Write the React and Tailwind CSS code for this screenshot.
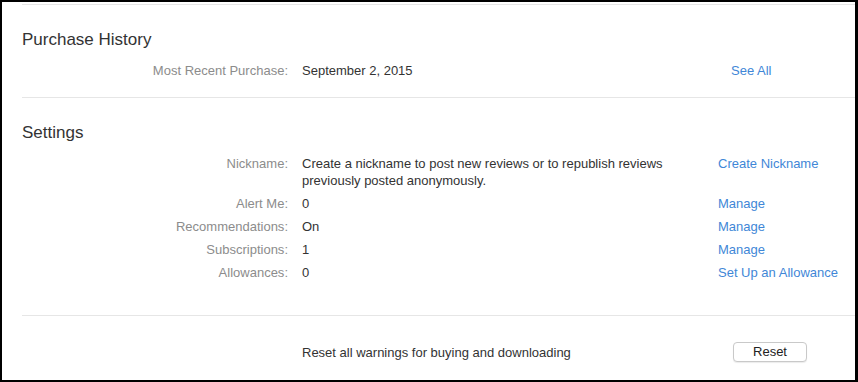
const SETTINGS = [
  { label: "Nickname", value: ["Create a nickname to post new reviews or to republish reviews", "previously posted anonymously."], link: "Create Nickname" },
  { label: "Alert Me", value: ["0"], link: "Manage" },
  { label: "Recommendations", value: ["On"], link: "Manage" },
  { label: "Subscriptions", value: ["1"], link: "Manage" },
  { label: "Allowances", value: ["0"], link: "Set Up an Allowance" },
];

function Row({ label, value, link, valueWidth }) {
  return (
    <div className="flex items-start text-[13px] leading-[17px]">
      <div className="w-[286px] shrink-0 text-right text-[#8c8c8c]">{label}:</div>
      <div className={`ml-[14px] shrink-0 text-[#333] ${valueWidth}`}>
        {value.map((line, i) => (
          <div key={i}>{line}</div>
        ))}
      </div>
      <a className="text-[#3f87d7] whitespace-nowrap">{link}</a>
    </div>
  );
}

export default function App() {
  return (
    <div
      className="w-[858px] h-[382px] bg-white border-black border-t-2 border-l-2 border-b-2 border-r-[3px] overflow-hidden flex flex-col"
      style={{ fontFamily: '"Liberation Sans", Arial, sans-serif' }}
    >
      <div className="mt-[2px] ml-[20px] h-px bg-[#e6e6e6] shrink-0" />

      {/* Purchase History */}
      <h2 className="mt-[25px] ml-[20px] text-[17px] leading-[20px] text-[#333]">Purchase History</h2>
      <div className="mt-[12px]">
        <Row
          label="Most Recent Purchase"
          value={["September 2, 2015"]}
          link="See All"
          valueWidth="w-[429px]"
        />
      </div>
      <div className="mt-[18px] ml-[20px] h-px bg-[#e6e6e6] shrink-0" />

      {/* Settings */}
      <h2 className="mt-[25px] ml-[20px] text-[17px] leading-[20px] text-[#333]">Settings</h2>
      <div className="mt-[12px] flex flex-col gap-[6px]">
        {SETTINGS.map((s) => (
          <Row key={s.label} {...s} valueWidth="w-[416px]" />
        ))}
      </div>
      <div className="mt-[34px] ml-[20px] h-px bg-[#e6e6e6] shrink-0" />

      {/* Reset */}
      <div className="mt-[26px] flex items-center text-[13px] leading-[17px]">
        <div className="ml-[300px] w-[431px] text-[#333]">Reset all warnings for buying and downloading</div>
        <button className="w-[74px] h-[20px] bg-white border border-[#c9c9c9] rounded-[4px] shadow-[0_1px_1px_rgba(0,0,0,0.08)] text-[13px] leading-[18px] text-[#222]">
          Reset
        </button>
      </div>
    </div>
  );
}
